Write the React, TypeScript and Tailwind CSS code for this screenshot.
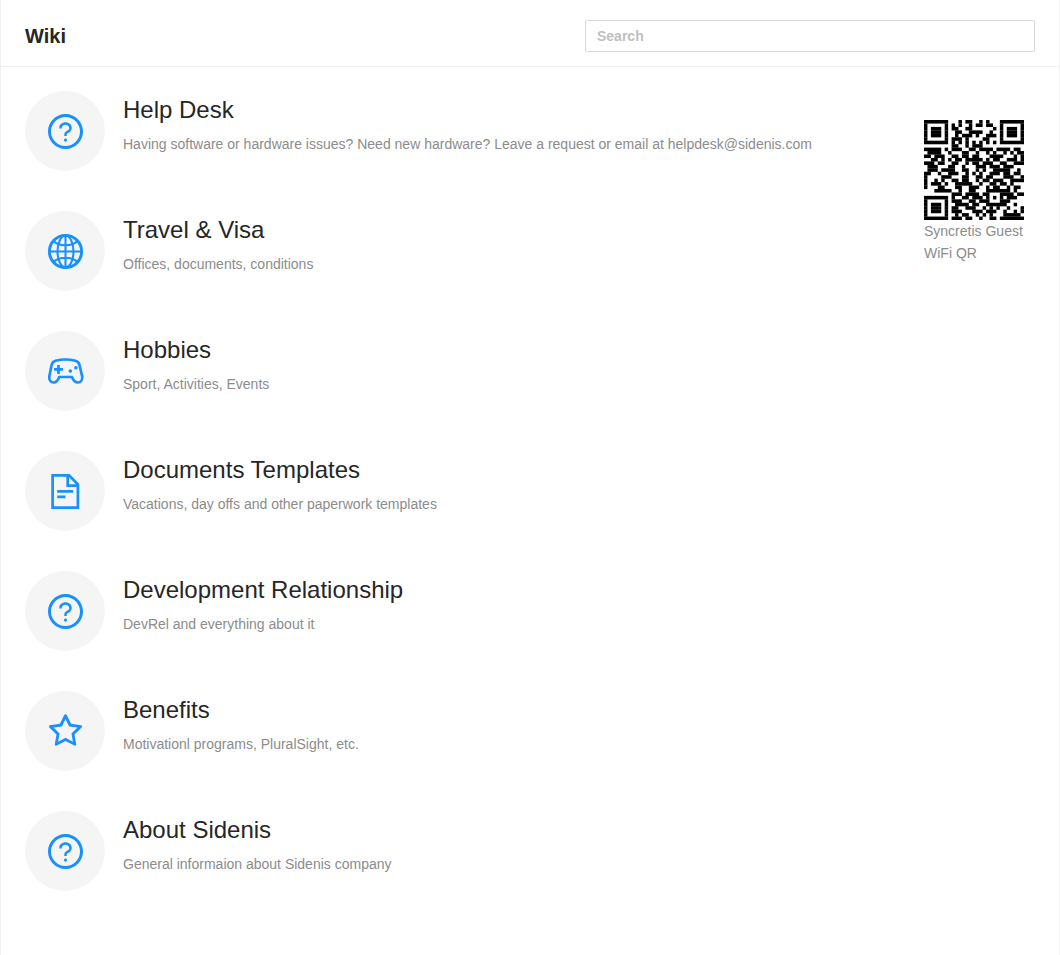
import type { ReactNode } from 'react';
import { AiOutlineQuestionCircle, AiOutlineStar } from 'react-icons/ai';

const QR_ROWS = [
  '11111110001011001010001111111',
  '10000010101001011011001000001',
  '10111010110011000000101011101',
  '10111010011001111001001011101',
  '10111010010111010011101011101',
  '10000010111010000110001000001',
  '11111110101010101010101111111',
  '00000000110010111000000000000',
  '11111010111001101111011110110',
  '01111001000110010010100101011',
  '11011100110110110001111000101',
  '00110101011011111010110011101',
  '11101100110010110111001100111',
  '01110001100100011101110111000',
  '01110111100110010100111110010',
  '11001001110010101001110110110',
  '10000111000110011011000111001',
  '10010100110110010110111001111',
  '10111010011111001001101101000',
  '10001100011001110010110010110',
  '00011111001001100011111110100',
  '00000000111011110110001111011',
  '11111110100110111010101011100',
  '10000010111001101110001110000',
  '10111010011110110011111100100',
  '10111010110011100101010010001',
  '10111010111000111011100100101',
  '10000010010110010101000111110',
  '11111110111011001001101111111',
];

function QrCode() {
  return (
    <svg
      className="block size-[100px]"
      viewBox="0 0 29 29"
      role="img"
      aria-label="Syncretis Guest WiFi QR"
    >
      {QR_ROWS.map((row, y) =>
        Array.from(row.matchAll(/1+/g)).map((run) => (
          <rect
            key={`${y}-${run.index}`}
            x={run.index}
            y={y}
            width={run[0].length}
            height="1.04"
          />
        )),
      )}
    </svg>
  );
}

const ICON_CLASS = 'size-[35px] overflow-visible';

function GlobeIcon() {
  return (
    <svg viewBox="0.5 0.5 35 35" className={ICON_CLASS} fill="none" stroke="currentColor" strokeWidth="2.1">
      <circle cx="18" cy="18" r="16.100" strokeWidth="2.900" />
      <ellipse cx="18" cy="18" rx="8" ry="16" />
      <path d="M18 2v32M2 18h32M6 7.500c3 3 7 4.300 12 4.300s9-1.300 12-4.300M6 28.500c3-3 7-4.300 12-4.300s9 1.300 12 4.300" />
    </svg>
  );
}

function GamepadIcon() {
  return (
    <svg viewBox="0.5 0.5 35 35" className={ICON_CLASS} fill="none" stroke="currentColor" strokeWidth="2.7">
      <path d="M8 7.300Q18 4.700 28 7.300Q31.200 8.200 32 11.500L34.700 23C35.300 27 32.900 29 30.300 29C27.300 29 25.800 27 24.400 23.500H11.800C10.400 27 9.200 29 6.200 29C3.600 29 1.200 27 1.800 23L4.100 11.500Q5 8.200 8 7.300Z" />
      <path d="M6.500 15.900h9M11 11.400v9" />
      <g fill="currentColor" stroke="none">
        <circle cx="22.800" cy="17.600" r="1.800" />
        <circle cx="28.400" cy="14.200" r="1.800" />
      </g>
    </svg>
  );
}

function DocumentIcon() {
  return (
    <svg viewBox="0.5 0.5 35 35" className={ICON_CLASS} fill="none" stroke="currentColor" strokeWidth="2.7">
      <path d="M5.100 1.900H21.500L30.400 10.800V34.100H5.100ZM20.200 1.900V12.200H30.400M9.700 17.900H25.600M9.700 23.400H18" />
    </svg>
  );
}

type Section = { title: string; description: string; icon: ReactNode };

const question = <AiOutlineQuestionCircle viewBox="64 64 896 896" className={ICON_CLASS} />;

const SECTIONS: Section[] = [
  {
    title: 'Help Desk',
    description:
      'Having software or hardware issues? Need new hardware? Leave a request or email at helpdesk@sidenis.com',
    icon: question,
  },
  { title: 'Travel & Visa', description: 'Offices, documents, conditions', icon: <GlobeIcon /> },
  { title: 'Hobbies', description: 'Sport, Activities, Events', icon: <GamepadIcon /> },
  {
    title: 'Documents Templates',
    description: 'Vacations, day offs and other paperwork templates',
    icon: <DocumentIcon />,
  },
  { title: 'Development Relationship', description: 'DevRel and everything about it', icon: question },
  {
    title: 'Benefits',
    description: 'Motivationl programs, PluralSight, etc.',
    icon: <AiOutlineStar viewBox="64 64 896 896" className={ICON_CLASS} />,
  },
  { title: 'About Sidenis', description: 'General informaion about Sidenis company', icon: question },
];

export default function App() {
  return (
    <div className="min-h-screen border-x border-[#f0f0f0] bg-white font-['Liberation_Sans',Arial,sans-serif] text-sm text-[#262626]">
      <header className="flex items-center justify-between gap-6 border-b border-[#f0f0f0] px-6 pt-5 pb-3.5">
        <h1 className="text-xl leading-8 font-bold">Wiki</h1>
        <input
          type="search"
          aria-label="Search"
          placeholder="Search"
          className="h-8 w-full max-w-[450px] rounded-xs border border-[#d9d9d9] px-[11px] font-bold outline-none placeholder:text-[#bfbfbf] focus:border-[#1890ff]"
        />
      </header>
      <main className="flex items-start justify-between gap-6 px-6 pt-6">
        <ul className="flex min-w-0 flex-col gap-10 pb-10">
          {SECTIONS.map(({ title, description, icon }) => (
            <li key={title}>
              <a href="#" className="flex gap-[18px]">
                <span className="flex size-20 shrink-0 items-center justify-center rounded-full bg-[#f5f5f5] text-[#1890ff]">
                  {icon}
                </span>
                <span className="flex flex-col gap-2">
                  <span className="pt-0.5 text-2xl leading-[34px]">{title}</span>
                  <span className="text-sm leading-[18px] text-[#8c8c8c]">{description}</span>
                </span>
              </a>
            </li>
          ))}
        </ul>
        <figure className="mt-[29px] mr-[11px] w-[100px] shrink-0">
          <QrCode />
          <figcaption className="leading-[22px] text-[#8c8c8c]">Syncretis Guest WiFi QR</figcaption>
        </figure>
      </main>
    </div>
  );
}
